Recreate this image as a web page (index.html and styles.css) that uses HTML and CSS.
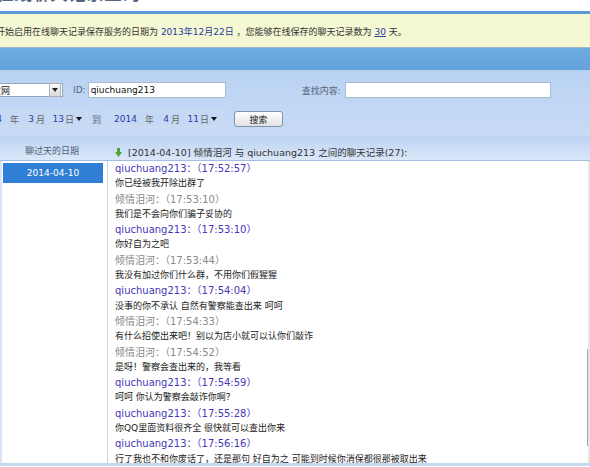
FILE: index.html
```html
<!DOCTYPE html>
<html lang="zh-CN">
<head>
    <meta charset="UTF-8">
    <title>聊天记录查询</title>
    <link rel="stylesheet" href="styles.css">
</head>
<body>

    <div class="title-strip"><h1>在线聊天记录查询</h1></div>

    <div class="notice">您开始启用在线聊天记录保存服务的日期为 <span class="since">2013年12月22日</span> ，您能够在线保存的聊天记录数为 <a class="days">30</a> 天。</div>

    <div class="band"></div>

    <form class="search">
        <div class="row">
            <div class="select shop"><span>淘宝网</span><i class="drop"><b class="caret"></b></i></div>
            <label class="lbl id-lbl">ID:</label>
            <input class="text id" type="text" value="qiuchuang213">
            <label class="lbl find-lbl">查找内容:</label>
            <input class="text keyword" type="text">
        </div>
        <div class="row">
            <div class="datebox first">
                <span class="y">2014</span><i>年</i><span class="m">3</span><i>月</i><span class="d">13</span><i>日</i><b class="caret"></b>
            </div>
            <span class="lbl to">到</span>
            <div class="datebox">
                <span class="y">2014</span><i>年</i><span class="m">4</span><i>月</i><span class="d">11</span><i>日</i><b class="caret"></b>
            </div>
            <button type="button">搜索</button>
        </div>
    </form>

    <div class="records">
        <div class="col-head">聊过天的日期</div>
        <div class="log-head">
            <svg class="arrow" width="7" height="9" viewBox="0 0 7 9"><rect x="2" y="0" width="3" height="4" fill="#4ea33a"/><polygon points="0,4 7,4 3.5,9" fill="#4ea33a"/></svg>
            [2014-04-10] 倾情泪河 与 qiuchuang213 之间的聊天记录(27):
        </div>

        <div class="dates">
            <div class="day on">2014-04-10</div>
        </div>

        <div class="log">
            <p class="who qc">qiuchuang213：（17:52:57）</p>
            <p>你已经被我开除出群了</p>
            <p class="who qq">倾情泪河：（17:53:10）</p>
            <p>我们是不会向你们骗子妥协的</p>
            <p class="who qc">qiuchuang213：（17:53:10）</p>
            <p>你好自为之吧</p>
            <p class="who qq">倾情泪河：（17:53:44）</p>
            <p>我没有加过你们什么群，不用你们假猩猩</p>
            <p class="who qc">qiuchuang213：（17:54:04）</p>
            <p>没事的你不承认 自然有警察能查出来 呵呵</p>
            <p class="who qq">倾情泪河：（17:54:33）</p>
            <p>有什么招使出来吧！别以为店小就可以认你们敲诈</p>
            <p class="who qq">倾情泪河：（17:54:52）</p>
            <p>是呀！警察会查出来的，我等看</p>
            <p class="who qc">qiuchuang213：（17:54:59）</p>
            <p>呵呵 你认为警察会敲诈你啊？</p>
            <p class="who qc">qiuchuang213：（17:55:28）</p>
            <p>你QQ里面资料很齐全 很快就可以查出你来</p>
            <p class="who qc">qiuchuang213：（17:56:16）</p>
            <p>行了我也不和你废话了，还是那句 好自为之 可能到时候你消保都很那被取出来</p>
        </div>
    </div>

    <div class="foot"></div>

</body>
</html>
```

FILE: styles.css
```css
body {
    margin: 0;
    width: 590px;
    overflow: hidden;
    font-family: "DejaVu Sans", "Noto Sans CJK SC", sans-serif;
    font-size: 9px;
    color: #333;
    background: #fff;
}

/* title, only its lower edge is in view */
.title-strip {
    height: 11px;
    overflow: hidden;
}

.title-strip h1 {
    margin: -15px 0 0 -4px;
    font-size: 18px;
    line-height: 18px;
    font-weight: bold;
    color: #56667c;
    white-space: nowrap;
}

.notice {
    height: 30px;
    padding-top: 3px;
    line-height: 30px;
    border-top: 3px solid #5b9ad8;
    border-bottom: 1px solid #a3b4c6;
    background: #f4f8d3;
    text-indent: -13px;
    white-space: nowrap;
    color: #333;
}

.since {
    color: #2b3b9c;
}

.days {
    color: #2b3ba4;
    text-decoration: underline;
}

.band {
    height: 22px;
    background: linear-gradient(#6eabe1, #64a2dd);
}

/* search form */
.search {
    margin: 0;
    padding: 12px 0 9px;
    background: linear-gradient(#b9d2f2, #c8dbf6);
}

.row {
    display: flex;
    align-items: center;
    height: 16px;
    white-space: nowrap;
}

.row + .row {
    margin-top: 13px;
}

.lbl {
    color: #56657a;
}

.select {
    display: flex;
    align-items: center;
    justify-content: space-between;
    height: 14px;
    border: 1px solid #8fa6c0;
    background: #fff;
    color: #222;
}

.shop {
    margin-left: -30px;
    padding-left: 12px;
    box-sizing: border-box;
    width: 93px;
}

.drop {
    display: flex;
    align-items: center;
    justify-content: center;
    width: 10px;
    height: 12px;
    margin-right: 1px;
    border: 1px solid #b2b2b2;
    background: linear-gradient(#fafafa, #dcdcdc);
}

.caret {
    display: inline-block;
    width: 0;
    height: 0;
    border-left: 3px solid transparent;
    border-right: 3px solid transparent;
    border-top: 4px solid #222;
}

.id-lbl {
    margin-left: 10px;
    margin-right: 2px;
}

.text {
    height: 16px;
    box-sizing: border-box;
    padding: 0 2px;
    border: 1px solid #a9bcd4;
    background: #fff;
    font-family: inherit;
    font-size: 9px;
    color: #111;
    outline: none;
}

.id {
    width: 138px;
}

.find-lbl {
    margin-left: 76px;
    margin-right: 4px;
}

.keyword {
    width: 206px;
}

.datebox {
    display: flex;
    align-items: center;
    width: 118px;
    height: 16px;
    box-sizing: border-box;
    padding: 0 5px 0 8px;
    border: 1px solid #cfdcee;
    background: #c5d9f5;
    color: #666;
}

.datebox.first {
    margin-left: -30px;
}

.datebox i {
    width: 9px;
    font-style: normal;
}

.datebox .y {
    width: 31px;
    color: #2c3ea8;
}

.datebox .m {
    width: 17px;
    padding-right: 2px;
    box-sizing: border-box;
    text-align: right;
    color: #2c3ea8;
}

.datebox .d {
    width: 20px;
    padding-right: 1px;
    box-sizing: border-box;
    text-align: right;
    color: #2c3ea8;
}

.datebox .caret {
    margin-left: 2px;
    border-top-color: #111;
}

.to {
    margin: 0 4px;
}

button {
    width: 49px;
    height: 16px;
    margin-left: 11px;
    padding: 0;
    border: 1px solid #8093ad;
    border-radius: 3px;
    background: linear-gradient(#ffffff, #e2e2e2);
    font-family: inherit;
    font-size: 9px;
    color: #222;
}

/* chat records */
.records {
    display: grid;
    grid-template-columns: 108px 1fr;
}

.col-head,
.log-head {
    height: 25px;
    padding-top: 8px;
    box-sizing: border-box;
    line-height: 15px;
    border-bottom: 1px solid #a3bde3;
    background: linear-gradient(#bcd3f2, #dbe7f9);
    white-space: nowrap;
}

.col-head {
    padding-right: 4px;
    text-align: center;
    color: #4d5d74;
}

.log-head {
    display: flex;
    align-items: center;
    padding-left: 7px;
    font-size: 9.5px;
    color: #333;
}

.arrow {
    margin-right: 6px;
}

.dates {
    height: 302px;
    box-sizing: border-box;
    padding-left: 1px;
    border-left: 2px solid #d9e5f4;
    border-right: 1px solid #c6d3e5;
}

.day {
    width: 100px;
    height: 20px;
    margin-top: 2px;
    line-height: 20px;
    text-align: center;
}

.day.on {
    background: #2f7fd6;
    color: #fff;
}

.log {
    position: relative;
    height: 302px;
    overflow: hidden;
    padding-left: 7px;
    border-right: 2px solid #e4e4e4;
}

.log::after {
    content: "";
    position: absolute;
    right: 0;
    top: 188px;
    width: 1px;
    height: 97px;
    background: #a5a5a5;
}

.log p {
    margin: 0;
    line-height: 15.3px;
    white-space: nowrap;
    color: #222;
}

.log .who {
    font-size: 10px;
}

.log .qc {
    color: #4538b8;
}

.log .qq {
    color: #8a8a8a;
}

.foot {
    height: 3px;
    background: #c5d8ef;
}
```
